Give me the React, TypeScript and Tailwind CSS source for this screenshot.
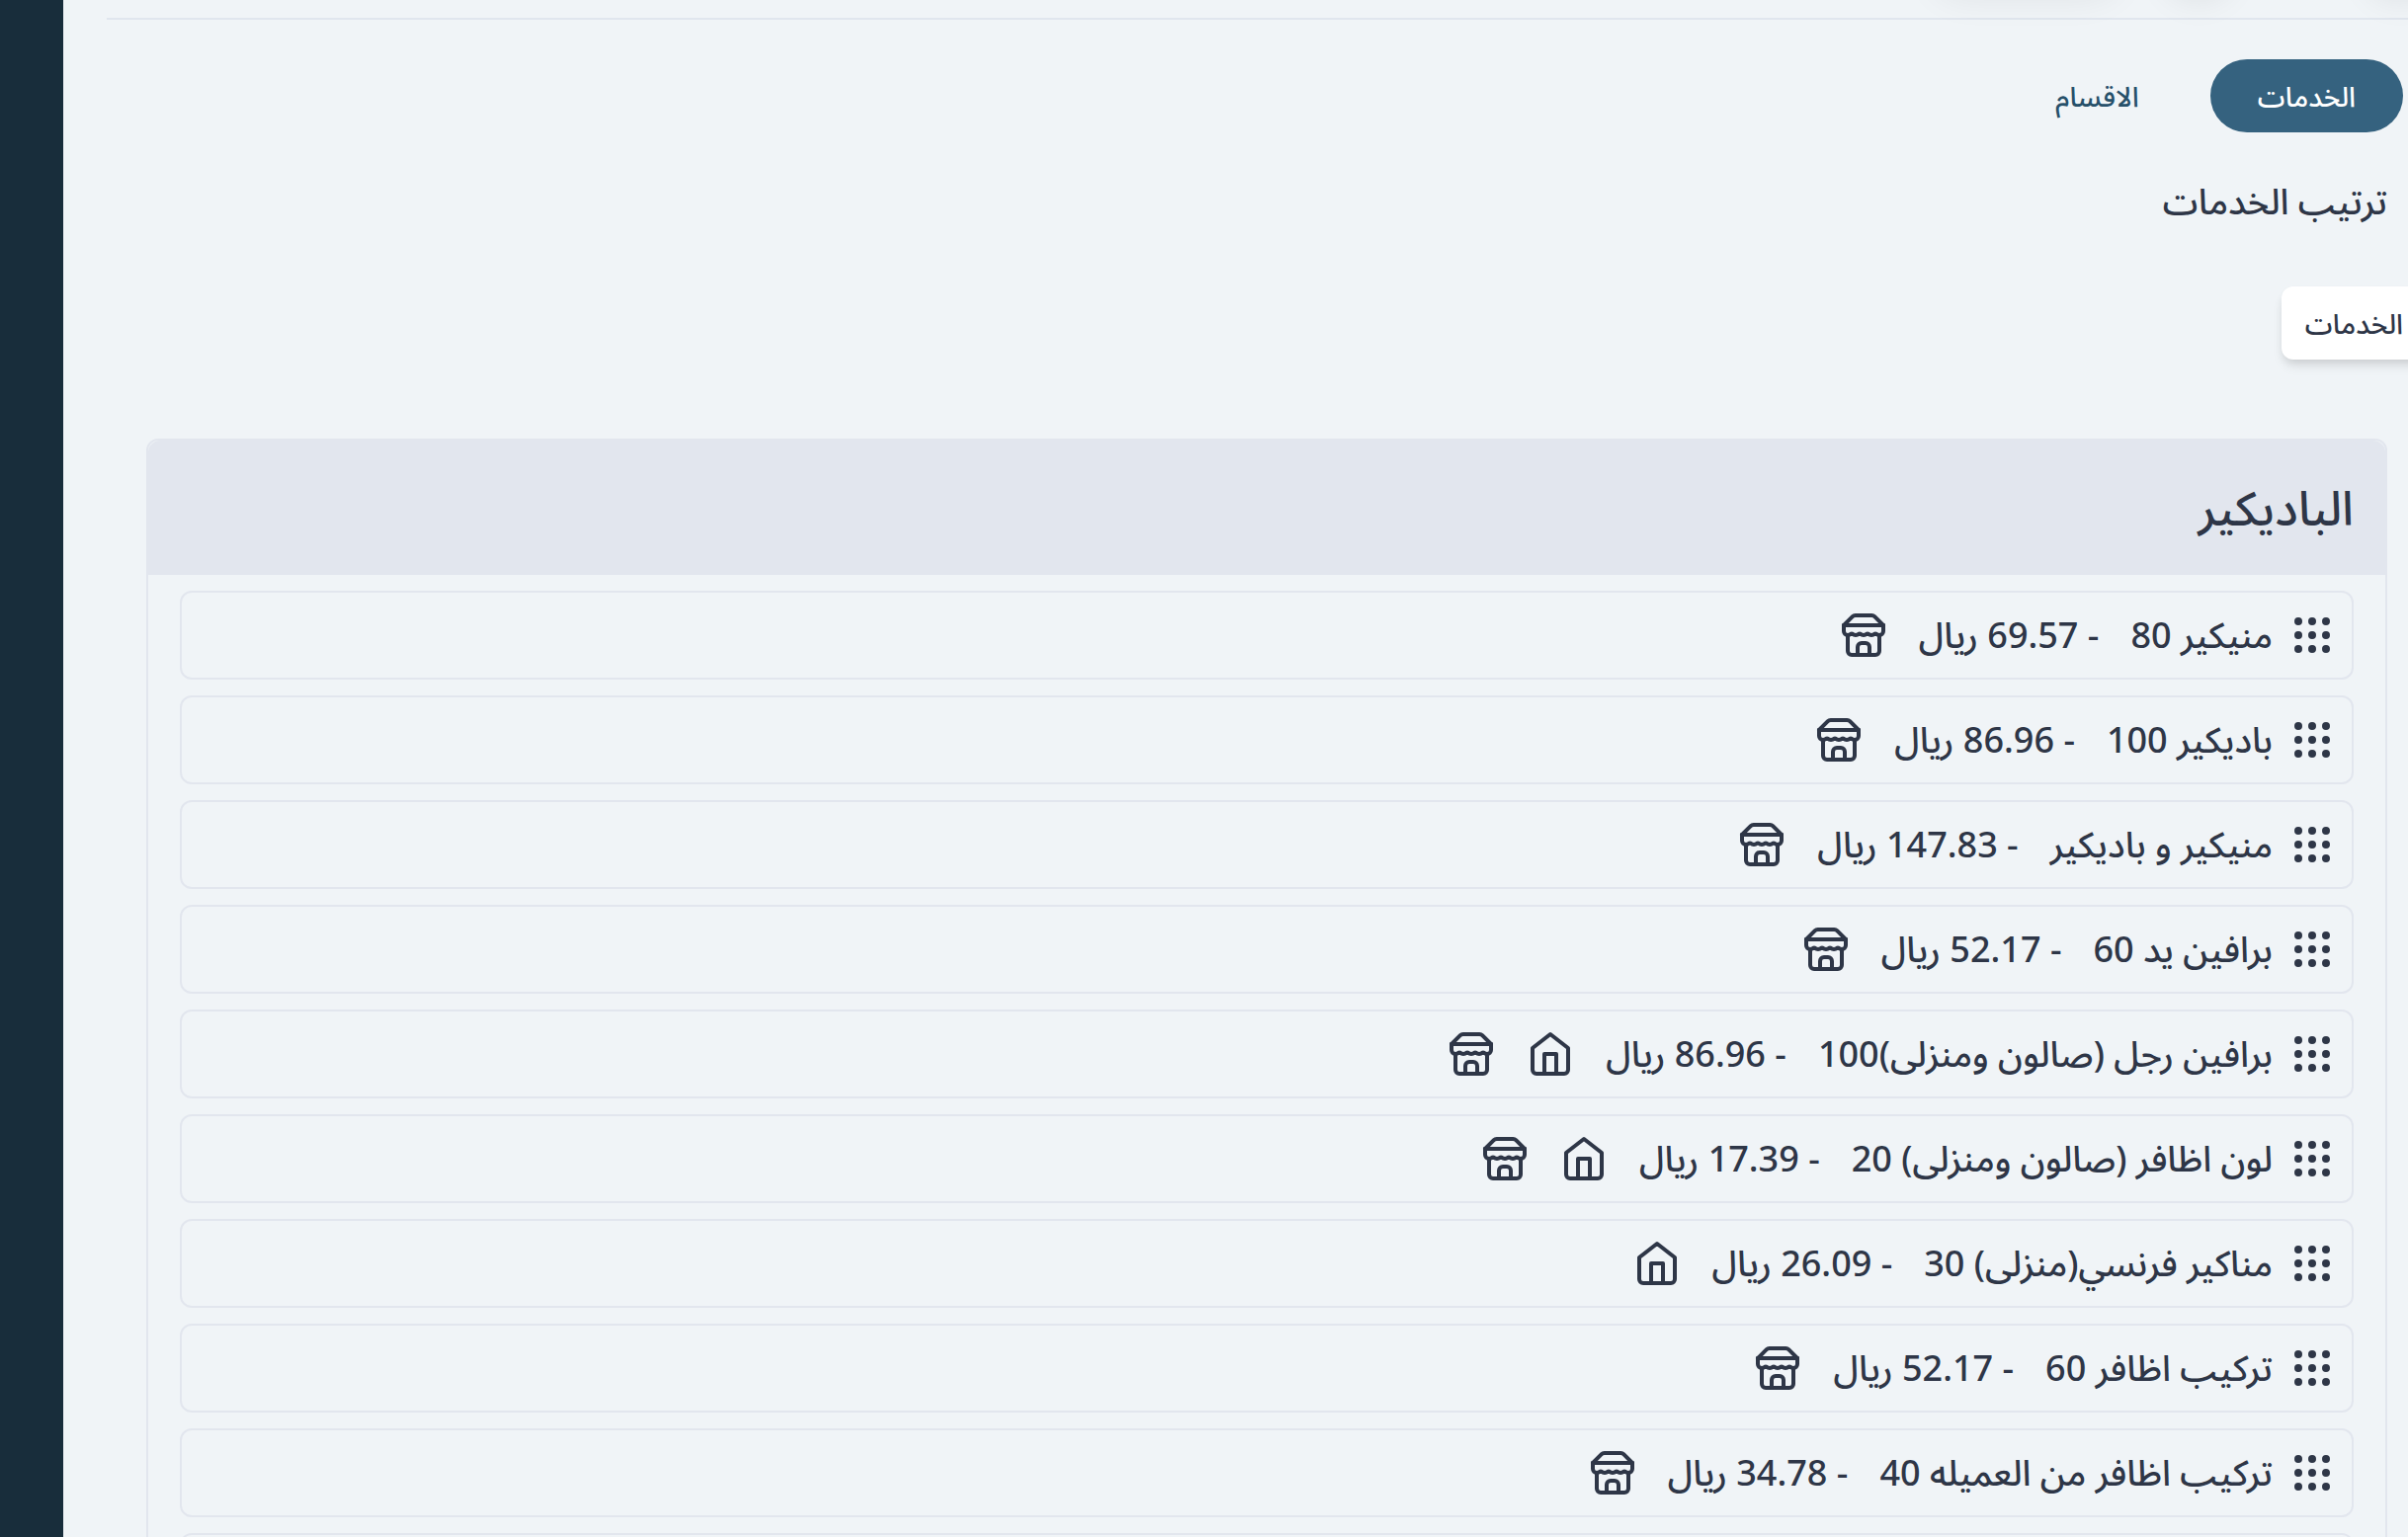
import React from 'react';
import { Grip } from 'lucide-react';

interface Service {
  name: string;
  price: string;
  atHome?: boolean;
  inSalon?: boolean;
}

const services: Service[] = [
  { name: 'منيكير 80', price: '69.57', inSalon: true },
  { name: 'باديكير 100', price: '86.96', inSalon: true },
  { name: 'منيكير و باديكير', price: '147.83', inSalon: true },
  { name: 'برافين يد 60', price: '52.17', inSalon: true },
  { name: 'برافين رجل (صالون ومنزلى)100', price: '86.96', atHome: true, inSalon: true },
  { name: 'لون اظافر (صالون ومنزلى) 20', price: '17.39', atHome: true, inSalon: true },
  { name: 'مناكير فرنسي(منزلى) 30', price: '26.09', atHome: true },
  { name: 'تركيب اظافر 60', price: '52.17', inSalon: true },
  { name: 'تركيب اظافر من العميله 40', price: '34.78', inSalon: true },
];

const iconProps = {
  viewBox: '0 0 24 24',
  fill: 'none',
  stroke: 'currentColor',
  strokeWidth: 2,
  strokeLinecap: 'round' as const,
  strokeLinejoin: 'round' as const,
  className: 'size-12 shrink-0',
};

const StoreIcon = () => (
  <svg {...iconProps} role="img" aria-label="صالون">
    <path d="m2 7 4.41-4.41A2 2 0 0 1 7.83 2h8.34a2 2 0 0 1 1.42.59L22 7" />
    <path d="M4 12v8a2 2 0 0 0 2 2h12a2 2 0 0 0 2-2v-8" />
    <path d="M15 22v-4a2 2 0 0 0-2-2h-2a2 2 0 0 0-2 2v4" />
    <path d="M2 7h20" />
    <path d="M22 7v3a2 2 0 0 1-2 2a2.7 2.7 0 0 1-1.59-.63.7.7 0 0 0-.82 0A2.7 2.7 0 0 1 16 12a2.7 2.7 0 0 1-1.59-.63.7.7 0 0 0-.82 0A2.7 2.7 0 0 1 12 12a2.7 2.7 0 0 1-1.59-.63.7.7 0 0 0-.82 0A2.7 2.7 0 0 1 8 12a2.7 2.7 0 0 1-1.59-.63.7.7 0 0 0-.82 0A2.7 2.7 0 0 1 4 12a2 2 0 0 1-2-2V7" />
  </svg>
);

const HomeIcon = () => (
  <svg {...iconProps} role="img" aria-label="منزلي">
    <path d="m3 9 9-7 9 7v11a2 2 0 0 1-2 2H5a2 2 0 0 1-2-2z" />
    <polyline points="9 22 9 12 15 12 15 22" />
  </svg>
);

const ServiceRow: React.FC<{ service: Service }> = ({ service }) => (
  <li className="flex h-[90px] items-center rounded-xl border-2 border-[#e2e6ee] px-4">
    <Grip className="size-12 shrink-0" />
    <span className="mr-4 whitespace-nowrap">{service.name}</span>
    <span className="mr-8 whitespace-nowrap">- {service.price} ريال</span>
    <div className="mr-8 flex gap-8">
      {service.atHome && <HomeIcon />}
      {service.inSalon && <StoreIcon />}
    </div>
  </li>
);

const App: React.FC = () => {
  return (
    <div
      dir="rtl"
      className="flex h-screen overflow-hidden bg-[#f0f4f7] font-['Noto_Sans','Noto_Sans_Arabic',sans-serif] font-medium text-[#2e3647]"
    >
      <main className="min-w-0 flex-1">
        {/* Bottom edge of the header, only its shadows reach down here */}
        <header className="relative mr-0 ml-11 h-5 border-b-2 border-[#e0e6ee]">
          <div className="absolute right-[290px] bottom-8 h-16 w-48 rounded-full shadow-[0_12px_36px_rgba(0,0,0,0.07)]" />
          <div className="absolute right-[180px] bottom-8 size-16 rounded-full shadow-[0_12px_36px_rgba(0,0,0,0.1)]" />
          <div className="absolute right-[-24px] bottom-8 size-16 rounded-full shadow-[0_12px_36px_rgba(0,0,0,0.1)]" />
        </header>

        {/* Tabs */}
        <nav className="mt-10 flex gap-6 pr-[5px] text-[28px]">
          <button className="h-[74px] rounded-full bg-[#35627f] px-12 text-white">الخدمات</button>
          <button className="h-[74px] rounded-full px-12 text-[#27506a]">الاقسام</button>
        </nav>

        <div className="pr-[21px] pl-[84px]">
          <h1 className="mt-10 text-[36px] leading-[60px]">ترتيب الخدمات</h1>

          <button className="mt-14 -mr-10 block h-[74px] rounded-xl bg-white px-6 text-[28px] shadow-[0_8px_12px_-2px_rgba(0,0,0,0.1),0_4px_8px_-2px_rgba(0,0,0,0.08)]">
            الخدمات
          </button>

          <section className="mt-20 rounded-xl border-2 border-[#e2e6ee]">
            <h2 className="flex h-[136px] items-center rounded-t-xl bg-[#e2e6ee] px-8 text-[48px]">الباديكير</h2>
            <ul className="flex flex-col gap-4 px-8 py-4 text-[36px]">
              {services.map((service) => (
                <ServiceRow key={service.name} service={service} />
              ))}
              <li className="h-[90px] rounded-xl border-2 border-[#e2e6ee]" />
            </ul>
          </section>
        </div>
      </main>

      <aside className="w-16 shrink-0 bg-[#182d3b]" />
    </div>
  );
};

export default App;
